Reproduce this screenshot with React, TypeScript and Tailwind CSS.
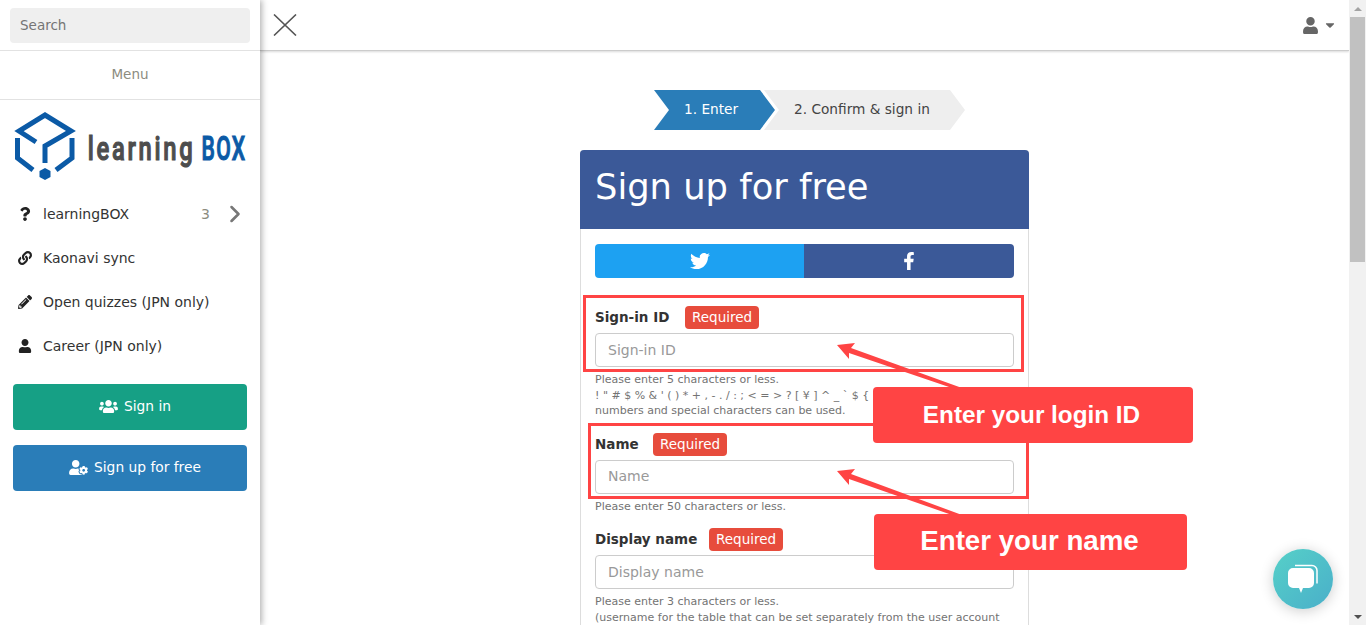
import { ChevronRight } from "lucide-react";
import {
  FaCaretDown,
  FaFacebookF,
  FaLink,
  FaPencilAlt,
  FaQuestion,
  FaTwitter,
  FaUser,
  FaUserCog,
  FaUsers,
} from "react-icons/fa";

const menuItems = [
  { name: "learningBOX", icon: <FaQuestion className="h-[14px] w-[14px]" />, count: 3 },
  { name: "Kaonavi sync", icon: <FaLink className="h-[14px] w-[14px]" /> },
  { name: "Open quizzes (JPN only)", icon: <FaPencilAlt className="h-[14px] w-[14px]" /> },
  { name: "Career (JPN only)", icon: <FaUser className="h-[14px] w-[14px]" /> },
];

const Logo = () => (
  <svg viewBox="0 0 240 80" className="ml-[10px] mt-[9px] h-[80px] w-[240px]">
    <g fill="none" stroke="#0b5aa6" strokeWidth="5">
      <path d="M26 33 L9 22 L35 6 L61 22 L35 37 V54" />
      <path d="M7.5 29 V49 L23 61" />
      <path d="M62 29 V49 L46 61" />
    </g>
    <polygon points="35,59 40.5,62 40.5,68 35,71 29.5,68 29.5,62" fill="#0b5aa6" />
    <text
      transform="scale(0.7 1)"
      x="111"
      y="51"
      fontFamily="Roboto, sans-serif"
      fontSize="34"
      fontWeight="500"
      fill="#4d4d4d"
      stroke="#4d4d4d"
      strokeWidth="1.2"
      textLength="150"
      lengthAdjust="spacing"
    >
      learning
    </text>
    <text
      transform="scale(0.62 1)"
      x="309"
      y="51"
      fontFamily="Roboto, sans-serif"
      fontSize="34"
      fontWeight="500"
      fill="#0b5aa6"
      stroke="#0b5aa6"
      strokeWidth="1.2"
      textLength="70"
      lengthAdjust="spacing"
    >
      BOX
    </text>
  </svg>
);

const Sidebar = () => (
  <aside className="relative z-20 flex h-[625px] w-[260px] shrink-0 flex-col bg-white shadow-[2px_0_6px_rgba(0,0,0,0.3)]">
    <div className="h-[51px] border-b border-[#e2e2e2] px-[10px] pt-2">
      <div className="flex h-[35px] items-center rounded bg-[#efefef] px-[10px] text-[13.5px] text-[#757575]">Search</div>
    </div>
    <div className="flex h-[49px] items-center justify-center border-b border-[#e2e2e2] pb-[2px] text-[13.5px] text-[#8c8c80]">Menu</div>
    <Logo />
    <ul className="mt-[3px]">
      {menuItems.map((item) => (
        <li key={item.name} className="flex h-[44px] items-center pl-[18px] text-[14px] text-[#333]">
          <span className="flex w-[25px] shrink-0 text-[#222]">{item.icon}</span>
          <span>{item.name}</span>
          {item.count && (
            <>
              <span className="ml-auto text-[#8c8c80]">{item.count}</span>
              <ChevronRight className="ml-[11px] mr-[11px] h-7 w-7 text-[#777]" strokeWidth={2.2} />
            </>
          )}
        </li>
      ))}
    </ul>
    <div className="mt-[16px] flex flex-col gap-[15px] px-[13px]">
      <button className="flex h-[46px] items-center justify-center gap-[6px] rounded bg-[#16a085] pb-[2px] pl-[10px] text-[13.8px] text-white">
        <FaUsers className="h-[15px] w-[19px]" />
        Sign in
      </button>
      <button className="flex h-[46px] items-center justify-center gap-[6px] rounded bg-[#2a7db8] pb-[2px] pl-[10px] text-[13.8px] text-white">
        <FaUserCog className="h-[15px] w-[19px]" />
        Sign up for free
      </button>
    </div>
  </aside>
);

const Steps = () => (
  <div className="mx-auto flex h-10 w-[449px] pl-[74px] text-[13.7px]">
    <div className="flex w-[121px] items-center bg-[#2a7db8] pb-[2px] pl-[30px] text-white [clip-path:polygon(0_0,106px_0,100%_50%,106px_100%,0_100%,15px_50%)]">
      1. Enter
    </div>
    <div className="-ml-[11px] flex w-[201px] items-center bg-[#eeeeee] pb-[2px] pl-[30px] text-[#444] [clip-path:polygon(0_0,186px_0,100%_50%,186px_100%,0_100%,15px_50%)]">
      2. Confirm &amp; sign in
    </div>
  </div>
);

const Field = ({ label, labelWidth, help }: { label: string; labelWidth: string; help: string[] }) => (
  <div>
    <div className="flex h-[23px] items-center">
      <span className={`text-[13.5px] font-bold text-[#333] ${labelWidth}`}>{label}</span>
      <span className="rounded bg-[#e74c3c] px-[7px] py-[2px] text-[13.5px] leading-[19px] text-white">Required</span>
    </div>
    <div className="mt-1 flex h-[34px] items-center rounded border border-[#cccccc] bg-white px-3 text-[14px] text-[#999]">
      {label}
    </div>
    <div className="mt-[5px] text-[11px] leading-[15.5px] text-[#737373]">
      {help.map((line) => (
        <p key={line} className="overflow-hidden whitespace-nowrap">{line}</p>
      ))}
    </div>
  </div>
);

const SignUpCard = () => (
  <div className="mx-auto mt-5 w-[449px] rounded-t border-x border-[#dddddd] bg-white">
    <div className="-mx-px flex h-[79px] items-center rounded-t bg-[#3b5998] px-[15px] pb-[4px] text-[35.3px] text-white">Sign up for free</div>
    <div className="px-[14px] pt-[15px]">
      <div className="flex h-[34px] overflow-hidden rounded text-white">
        <div className="flex w-[209px] items-center justify-center bg-[#1da1f2]">
          <FaTwitter className="h-5 w-5" />
        </div>
        <div className="flex flex-1 items-center justify-center bg-[#3b5998]">
          <FaFacebookF className="h-[18px] w-[18px]" />
        </div>
      </div>
      <div className="mt-7 flex flex-col gap-[14px]">
        <Field
          label="Sign-in ID"
          labelWidth="w-[90px]"
          help={[
            "Please enter 5 characters or less.",
            "! \" # $ % & ' ( ) * + , - . / : ; < = > ? [ ¥ ] ^ _ ` $ { | } ~ alphabets,",
            "numbers and special characters can be used.",
          ]}
        />
        <Field label="Name" labelWidth="w-[58px]" help={["Please enter 50 characters or less."]} />
        <Field
          label="Display name"
          labelWidth="w-[114px]"
          help={[
            "Please enter 3 characters or less.",
            "(username for the table that can be set separately from the user account",
          ]}
        />
      </div>
    </div>
  </div>
);

const Annotations = () => (
  <>
    <div className="absolute left-[583px] top-[295px] z-10 h-[77px] w-[441px] border-[3px] border-[#ff4444]" />
    <div className="absolute left-[588px] top-[423px] z-10 h-[76px] w-[441px] border-[3px] border-[#ff4444]" />
    <svg className="pointer-events-none absolute left-0 top-0 z-10 h-[625px] w-[1366px]" viewBox="0 0 1366 625">
      <polygon points="837,345 855,343 851,348 962,388 952,388 849,353 849,359" fill="#ff4444" />
      <polygon points="837,471 855,469 851,474 962,515 952,515 849,479 849,485" fill="#ff4444" />
    </svg>
    <div className="absolute left-[873px] top-[387px] z-10 flex h-[56px] w-[320px] items-center justify-center rounded bg-[#ff4444] pr-[3px] font-['Liberation_Sans',sans-serif] text-[24.3px] font-bold text-white">
      Enter your login ID
    </div>
    <div className="absolute left-[874px] top-[514px] z-10 flex h-[56px] w-[313px] items-center justify-center rounded bg-[#ff4444] pb-[2px] pr-[2px] font-['Liberation_Sans',sans-serif] text-[27.7px] font-bold text-white">
      Enter your name
    </div>
    <div className="absolute left-[1273px] top-[549px] z-10 flex h-[60px] w-[60px] items-center justify-center rounded-full bg-gradient-to-br from-[#56d0c8] to-[#4aafc9] shadow-[0_2px_14px_rgba(0,0,0,0.2)]">
      <svg viewBox="0 0 32 32" className="h-8 w-8">
        <path d="M8 2.5 h17 a5 5 0 0 1 5 5 v13" fill="none" stroke="#fff" strokeWidth="1.5" />
        <path d="M6 5 h16 a5 5 0 0 1 5 5 v10 a5 5 0 0 1 -5 5 h-6 l-2 5 l-2 -5 h-6 a5 5 0 0 1 -5 -5 v-10 a5 5 0 0 1 5 -5 z" fill="#fff" />
      </svg>
    </div>
  </>
);

const Scrollbar = () => (
  <div className="flex h-[625px] w-[17px] shrink-0 flex-col items-center bg-[#f1f1f1]">
    <div className="flex h-[17px] items-center justify-center">
      <div className="h-0 w-0 border-x-[4px] border-b-[4px] border-x-transparent border-b-[#a3a3a3]" />
    </div>
    <div className="h-[245px] w-[15px] bg-[#c1c1c1]" />
    <div className="mt-auto flex h-[17px] items-center justify-center">
      <div className="h-0 w-0 border-x-[4px] border-t-[4px] border-x-transparent border-t-[#505050]" />
    </div>
  </div>
);

const App = () => {
  return (
    <div className="relative flex h-[625px] w-[1366px] overflow-hidden bg-white font-['DejaVu_Sans',sans-serif]">
      <Sidebar />
      <main className="h-[625px] flex-1 overflow-hidden">
        <header className="flex h-[51px] items-center justify-between border-b border-[#cccccc] pl-[13px] pr-[14px] shadow-[0_1px_2px_rgba(0,0,0,0.15)]">
          <svg viewBox="0 0 24 22" className="h-[22px] w-[24px]" fill="none" stroke="#555" strokeWidth="1.6">
            <path d="M1 0.5 L23 21.5 M23 0.5 L1 21.5" />
          </svg>
          <div className="flex items-center gap-[6px] text-[#666]">
            <FaUser className="h-[17px] w-[17px]" />
            <FaCaretDown className="h-[14px] w-[10px]" />
          </div>
        </header>
        <div className="pt-[39px]">
          <Steps />
          <SignUpCard />
        </div>
      </main>
      <Scrollbar />
      <Annotations />
    </div>
  );
};

export default App;
